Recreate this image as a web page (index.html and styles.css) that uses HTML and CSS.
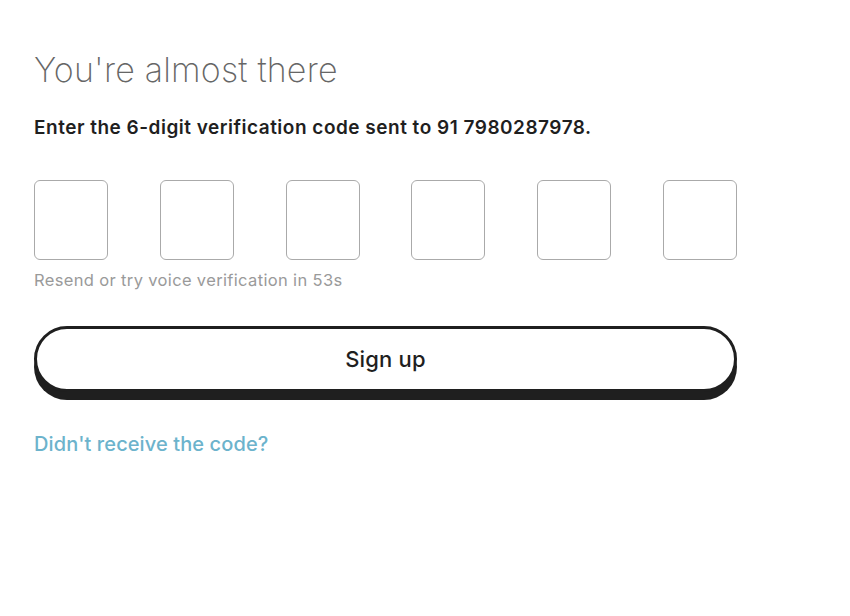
FILE: index.html
```html
<!DOCTYPE html>
<html>
<head>
<meta charset="utf-8">
<link rel="stylesheet" href="styles.css">
</head>
<body>
<main class="page">
  <h1 class="title">You're almost there</h1>
  <p class="subtitle">Enter the 6-digit verification code sent to 91 7980287978.</p>
  <div class="code-row">
    <input class="code-box" type="text" maxlength="1">
    <input class="code-box" type="text" maxlength="1">
    <input class="code-box" type="text" maxlength="1">
    <input class="code-box" type="text" maxlength="1">
    <input class="code-box" type="text" maxlength="1">
    <input class="code-box" type="text" maxlength="1">
  </div>
  <p class="resend">Resend or try voice verification in 53s</p>
  <button class="signup">Sign up</button>
  <a class="help" href="#">Didn't receive the code?</a>
</main>
</body>
</html>
```
FILE: styles.css
```css
* { box-sizing: border-box; }
html, body { margin: 0; padding: 0; background: #fff; }
body { font-family: Inter, "Liberation Sans", sans-serif; color: #1f1f1f; }
.page {
  width: 703px;
  margin-left: 34px;
  padding-top: 48px;
  display: flex;
  flex-direction: column;
}
.title {
  margin: 0;
  font-size: 34px;
  font-weight: 200;
  color: #666;
  line-height: 44px;
  letter-spacing: 0.2px;
}
.subtitle {
  margin: 24px 0 0;
  font-size: 19px;
  font-weight: 600;
  line-height: 24px;
  color: #1f1f1f;
  letter-spacing: 0.5px;
}
.code-row {
  margin-top: 40px;
  display: flex;
  justify-content: space-between;
}
.code-box {
  width: 74px;
  height: 80px;
  border: 1.5px solid #aaa;
  border-radius: 6px;
  background: #fff;
  outline: none;
  padding: 0;
}
.resend {
  margin: 10px 0 0;
  font-size: 16.5px;
  line-height: 20px;
  color: #9a9a9a;
  letter-spacing: 0.35px;
}
.signup {
  margin-top: 36px;
  height: 66px;
  border: 3px solid #1f1f1f;
  border-radius: 33px;
  background: #fff;
  box-shadow: 0 8px 0 #1f1f1f;
  font-family: inherit;
  font-size: 22px;
  font-weight: 500;
  color: #1f1f1f;
  letter-spacing: 0.2px;
}
.help {
  margin-top: 40px;
  font-size: 20px;
  font-weight: 500;
  color: #6cb3cc;
  text-decoration: none;
  line-height: 24px;
  letter-spacing: 0.1px;
  align-self: flex-start;
}
```
